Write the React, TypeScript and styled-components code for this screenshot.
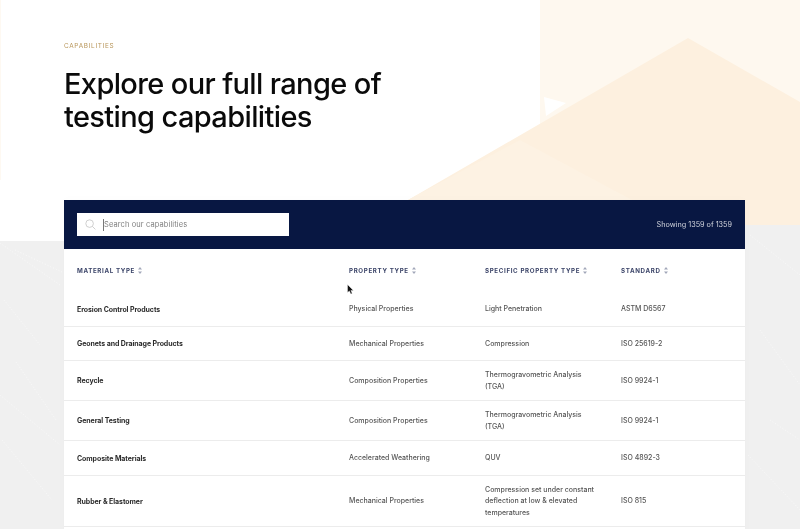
import * as React from 'react';
import styled, { createGlobalStyle } from 'styled-components';

const GlobalStyle = createGlobalStyle`
  html, body {
    margin: 0;
    padding: 0;
    background: #f0f0f0;
    font-family: Inter, "Liberation Sans", sans-serif;
  }
  body {
    height: 529px;
    overflow: hidden;
  }
`;

const Page = styled.div`
  position: relative;
  width: 800px;
  height: 529px;
  overflow: hidden;
`;

const Backdrop = styled.svg`
  position: absolute;
  top: 0;
  left: 0;
`;

const Content = styled.div`
  position: relative;
  padding: 42px 55px 0 64px;
  will-change: transform;
`;

const Eyebrow = styled.div`
  font-size: 6.4px;
  line-height: 9px;
  letter-spacing: 0.7px;
  color: #b8965a;
  text-transform: uppercase;
`;

const Title = styled.h1`
  margin: 16px 0 0;
  font-size: 29px;
  line-height: 33px;
  font-weight: 500;
  letter-spacing: -0.63px;
  color: #0a0a0a;
`;

const Panel = styled.div`
  margin-top: 67px;
  padding-bottom: 40px;
  background: #fff;
  box-shadow: 0 0 10px rgba(0, 0, 0, 0.02);
`;

const Toolbar = styled.div`
  display: flex;
  align-items: center;
  justify-content: space-between;
  height: 49px;
  padding: 0 13px;
  background: #081742;
`;

const SearchBox = styled.div`
  display: flex;
  align-items: center;
  width: 212px;
  height: 23px;
  padding-left: 8px;
  box-sizing: border-box;
  background: #fff;
`;

const Caret = styled.span`
  width: 1px;
  height: 12px;
  margin-left: 7px;
  background: #777;
`;

const SearchText = styled.span`
  font-size: 7.5px;
  letter-spacing: 0.1px;
  color: #808080;
`;

const Count = styled.span`
  font-size: 7.25px;
  color: #d2d5dd;
`;

const Row = styled.div<{ $h: number; $line?: boolean }>`
  display: grid;
  grid-template-columns: 272px 136px 136px 1fr;
  align-items: center;
  height: ${(p) => p.$h}px;
  padding-left: 13px;
  box-sizing: border-box;
  border-bottom: ${(p) => (p.$line ? '1px solid #ececec' : 'none')};
`;

const HeadCell = styled.div`
  display: flex;
  align-items: center;
  gap: 3px;
  font-size: 6.2px;
  font-weight: 700;
  letter-spacing: 0.65px;
  color: #3b4468;
  text-transform: uppercase;
`;

const Material = styled.div`
  font-size: 7px;
  font-weight: 700;
  letter-spacing: -0.08px;
  color: #2b2b2b;
`;

const Cell = styled.div`
  font-size: 7px;
  font-weight: 450;
  line-height: 11.4px;
  padding-right: 26px;
  color: #555;
`;

const Cursor = styled.svg`
  position: absolute;
  left: 347px;
  top: 284px;
`;

const SortIcon = () => (
  <svg width="4" height="7" viewBox="0 0 4 7">
    <path d="M2 0 L4 2.6 H0 Z M2 7 L0 4.4 H4 Z" fill="#a2a7b9" />
  </svg>
);

const SearchIcon = () => (
  <svg width="11" height="11" viewBox="0 0 11 11" fill="none" stroke="#c4c4c4" strokeWidth="0.8">
    <circle cx="4.6" cy="4.6" r="3.8" />
    <path d="M7.4 7.4 L10.4 10.4" />
  </svg>
);

const rows = [
  { h: 35, m: 'Erosion Control Products', p: 'Physical Properties', s: 'Light Penetration', t: 'ASTM D6567' },
  { h: 34, m: 'Geonets and Drainage Products', p: 'Mechanical Properties', s: 'Compression', t: 'ISO 25619-2' },
  { h: 40, m: 'Recycle', p: 'Composition Properties', s: 'Thermogravometric Analysis (TGA)', t: 'ISO 9924-1' },
  { h: 40, m: 'General Testing', p: 'Composition Properties', s: 'Thermogravometric Analysis (TGA)', t: 'ISO 9924-1' },
  { h: 35, m: 'Composite Materials', p: 'Accelerated Weathering', s: 'QUV', t: 'ISO 4892-3' },
  { h: 51, m: 'Rubber & Elastomer', p: 'Mechanical Properties', s: 'Compression set under constant deflection at low & elevated temperatures', t: 'ISO 815' },
];

export default function App() {
  return (
    <Page>
      <GlobalStyle />
      <Backdrop width="800" height="529" viewBox="0 0 800 529">
        <rect x="0" y="0" width="800" height="241" fill="#ffffff" />
        <rect x="745" y="225" width="55" height="16" fill="#f0f0f0" />
        <rect x="0" y="0" width="1" height="180" fill="#fef9f2" />
        <rect x="540" y="0" width="260" height="225" fill="#fef8ef" />
        <path d="M544 97 L566 103 L546 116 Z" fill="#ffffff" />
        <path d="M688 38 L800 102 V225 H745 V241 H408 V200 Z" fill="#fdf0df" />
        <path d="M408 200 L520 140 L632 200 Z" fill="#fdf2e3" />
        <g stroke="#fafafa" strokeWidth="0.8" strokeDasharray="1 2" fill="none">
          <path d="M0 243 L60 285 M15 250 L62 272 M4 300 L40 345 M0 395 L60 445 M2 440 L52 500 M16 362 L56 420" />
          <path d="M750 235 L800 275 M760 330 L800 385 M748 455 L800 510 M770 420 L800 440" />
        </g>
      </Backdrop>
      <Content>
        <Eyebrow>Capabilities</Eyebrow>
        <Title>
          Explore our full range of
          <br />
          testing capabilities
        </Title>
        <Panel>
          <Toolbar>
            <SearchBox>
              <SearchIcon />
              <Caret />
              <SearchText>Search our capabilities</SearchText>
            </SearchBox>
            <Count>Showing 1359 of 1359</Count>
          </Toolbar>
          <Row $h={43}>
            <HeadCell>Material Type <SortIcon /></HeadCell>
            <HeadCell>Property Type <SortIcon /></HeadCell>
            <HeadCell>Specific Property Type <SortIcon /></HeadCell>
            <HeadCell>Standard <SortIcon /></HeadCell>
          </Row>
          {rows.map((r) => (
            <Row key={r.m} $h={r.h} $line>
              <Material>{r.m}</Material>
              <Cell>{r.p}</Cell>
              <Cell>{r.s}</Cell>
              <Cell>{r.t}</Cell>
            </Row>
          ))}
        </Panel>
      </Content>
      <Cursor width="8" height="11" viewBox="0 0 8 11">
        <path d="M0.5 0.5 V8.5 L2.4 6.9 L3.8 10 L5.2 9.4 L3.9 6.4 H6.4 Z" fill="#111" stroke="#fff" strokeWidth="0.4" />
      </Cursor>
    </Page>
  );
}
